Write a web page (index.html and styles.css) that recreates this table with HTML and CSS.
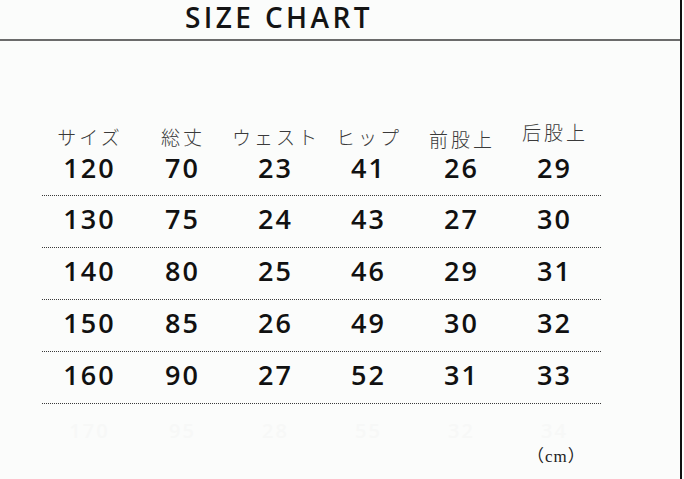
FILE: index.html
```html
<!DOCTYPE html>
<html lang="ja">
<head>
<meta charset="utf-8">
<title>SIZE CHART</title>
<link rel="stylesheet" href="styles.css">
</head>
<body>
<div class="page">
  <header class="head">
    <h1 class="title">SIZE CHART</h1>
  </header>
  <section class="chart">
    <div class="labels">
      <span>サイズ</span>
      <span>総丈</span>
      <span>ウェスト</span>
      <span>ヒップ</span>
      <span class="low">前股上</span>
      <span class="high">后股上</span>
    </div>
    <div class="row first"><span>120</span><span>70</span><span>23</span><span>41</span><span>26</span><span>29</span></div>
    <div class="row"><span>130</span><span>75</span><span>24</span><span>43</span><span>27</span><span>30</span></div>
    <div class="row"><span>140</span><span>80</span><span>25</span><span>46</span><span>29</span><span>31</span></div>
    <div class="row"><span>150</span><span>85</span><span>26</span><span>49</span><span>30</span><span>32</span></div>
    <div class="row"><span>160</span><span>90</span><span>27</span><span>52</span><span>31</span><span>33</span></div>
    <div class="row ghost"><span>170</span><span>95</span><span>28</span><span>55</span><span>32</span><span>34</span></div>
    <p class="unit">（cm）</p>
  </section>
</div>
</body>
</html>
```
FILE: styles.css
```css
html, body {
  margin: 0;
  padding: 0;
  background: #fbfcfb;
}
.page {
  width: 680px;
  height: 479px;
  border-right: 2px solid #111;
  overflow: hidden;
}
.head {
  display: flex;
  align-items: flex-start;
  height: 39px;
  border-bottom: 2px solid #6b6b6b;
  padding-left: 185px;
  box-sizing: content-box;
}
.title {
  margin: 0;
  padding: 0 6px 0 0;
  white-space: nowrap;
  font-family: "Open Sans", "Liberation Sans", sans-serif;
  font-weight: 600;
  font-size: 28px;
  letter-spacing: 3.4px;
  line-height: 34px;
  color: #141414;
}
.chart {
  margin-left: 42px;
  width: 559px;
}
.labels,
.row {
  display: grid;
  grid-template-columns: repeat(6, 93px);
  justify-items: center;
}
.labels {
  padding-top: 87px;
  grid-template-rows: 18px;
  font-family: "Noto Sans CJK JP", sans-serif;
  font-weight: 300;
  font-size: 19px;
  line-height: 18px;
  letter-spacing: 3px;
  color: #3a3a3a;
}
.labels span { padding-left: 3px; }
.labels .low { margin-top: 2px; }
.labels .high { margin-top: -5px; }
.row {
  padding: 3px 0 8px;
  border-bottom: 1px dotted #3a3a3a;
  font-family: "Open Sans", "Liberation Sans", sans-serif;
  font-weight: 600;
  font-size: 27px;
  line-height: 40px;
  letter-spacing: 2px;
  color: #111;
}
.row span { padding-left: 2px; }
.row.first {
  padding: 2px 0 7px;
}
.row.ghost {
  border-bottom: none;
  color: #f7f8f7;
  padding-top: 12px;
  padding-bottom: 0;
  font-size: 20px;
  line-height: 30px;
}
.unit {
  margin: 0;
  padding-left: 485px;
  font-family: "Liberation Serif", "Noto Sans CJK JP", serif;
  font-size: 17px;
  letter-spacing: 1px;
  line-height: 22px;
  color: #222;
}
```
